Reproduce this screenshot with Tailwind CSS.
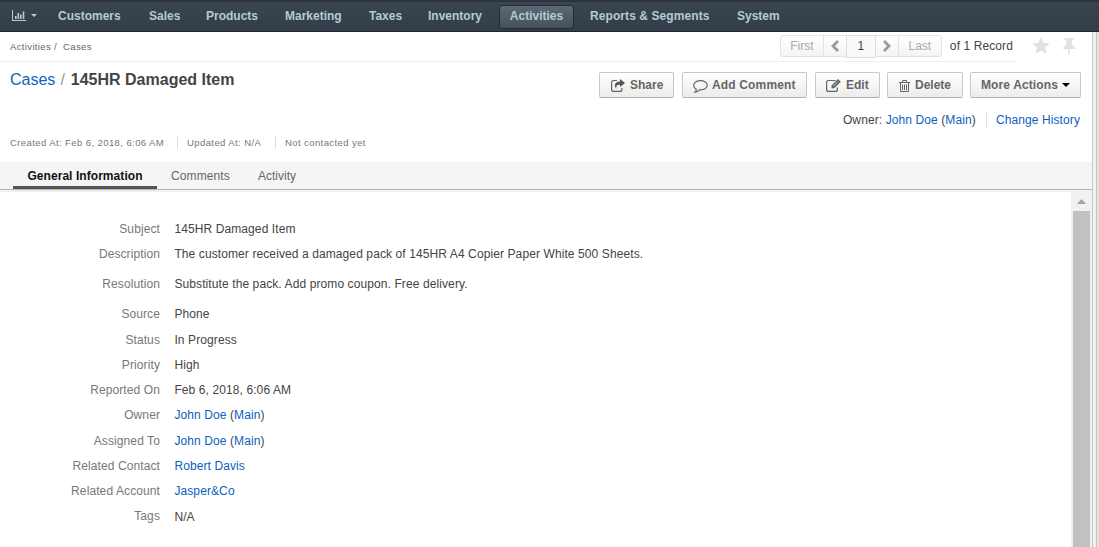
<!DOCTYPE html>
<html lang="en">
<head>
<meta charset="utf-8">
<title>145HR Damaged Item - Cases</title>
<script src="https://cdn.jsdelivr.net/npm/@tailwindcss/browser@4"></script>
</head>
<body class="bg-white">
<div class="w-[1099px] h-[547px] overflow-hidden flex flex-col font-['Liberation_Sans',Arial,sans-serif] text-[12px] leading-[16px] text-[#444]">
  <nav class="h-8 shrink-0 flex items-center border-t-2 border-t-[#2b343c] border-b border-b-[#1d2733] bg-linear-to-b from-[#3a454f] to-[#323d47] text-[#b3cbd7] font-bold">
    <div class="w-[44px] pl-3 pb-[2px] flex items-center gap-[5px]">
      <svg class="w-[14px] h-[11px]" viewBox="0 0 14 11" fill="currentColor"><path d="M0 0h1v10h13v1H0zM3 6h1.600v3H3zM5.500 3h1.600v6H5.500zM8 4.500h1.600V9H8zM10.700 1.500h1.600V9h-1.600z"/></svg>
      <svg class="w-[6px] h-[3px]" viewBox="0 0 6 3" fill="currentColor"><path d="M0 0h6L3 3z"/></svg>
    </div>
    <a class="w-[91px] pl-[14px] pb-[2px]">Customers</a>
    <a class="w-[57px] pl-[14px] pb-[2px]">Sales</a>
    <a class="w-[79px] pl-[14px] pb-[2px]">Products</a>
    <a class="w-[84px] pl-[14px] pb-[2px]">Marketing</a>
    <a class="w-[59px] pl-[14px] pb-[2px]">Taxes</a>
    <a class="w-[85px] pl-[14px] pb-[2px]">Inventory</a>
    <a class="w-[75px] h-6 pb-[2px] flex items-center justify-center rounded-[3px] border border-[#232c36] bg-linear-to-b from-[#5c6874] to-[#46515c]">Activities</a>
    <a class="w-[149px] pl-[16px] pb-[2px] tracking-[0.08px]">Reports &amp; Segments</a>
    <a class="pl-[14px] pb-[2px]">System</a>
  </nav>
  <div class="flex flex-1 min-h-0">
    <main class="w-[1092px] flex flex-col">
      <div class="h-[30px] shrink-0 flex">
        <div class="w-[1017px] flex border-b border-[#eee]">
          <div class="pl-[10px] pt-[7px] text-[9.5px] tracking-[0.36px] text-[#666] whitespace-pre">Activities /  Cases</div>
          <div class="ml-auto mr-[4px] pt-[3px] flex items-start">
            <div class="flex h-[22px] text-[#aaa] leading-[20px] text-center">
              <div class="w-[44px] border border-[#e3e3e3] rounded-l-[3px] bg-linear-to-b from-white to-[#f4f4f4]">First</div>
              <div class="w-[22px] border-y border-[#e3e3e3] bg-linear-to-b from-white to-[#f4f4f4] flex items-center justify-center"><svg class="w-2 h-3" viewBox="0 0 8 12" fill="none" stroke="#999" stroke-width="2.800"><path d="M7 1L2 6l5 5"/></svg></div>
              <div class="w-[30px] h-[23px] border border-[#ddd] bg-[#f9f9f9] text-[#444]">1</div>
              <div class="w-[22px] border-y border-[#e3e3e3] bg-linear-to-b from-white to-[#f4f4f4] flex items-center justify-center"><svg class="w-2 h-3" viewBox="0 0 8 12" fill="none" stroke="#999" stroke-width="2.800"><path d="M1 1l5 5-5 5"/></svg></div>
              <div class="w-[44px] border border-[#e3e3e3] rounded-r-[3px] bg-linear-to-b from-white to-[#f4f4f4]">Last</div>
            </div>
            <span class="pl-2 pt-[3px] leading-[16px] tracking-[0.1px]">of 1 Record</span>
          </div>
        </div>
        <svg class="ml-[15px] mt-[5px] w-[18px] h-[17px]" viewBox="0 0 18 17" fill="#e2e2e2"><path d="M9 0l2.600 5.700 6.100.7-4.500 4.200 1.200 6.100L9 13.700l-5.400 3 1.200-6.100L.3 6.400l6.100-.7z"/></svg>
        <svg class="ml-[13px] mt-[6px] w-[12px] h-[17px]" viewBox="0 0 12 17" fill="#e2e2e2"><path d="M1.500 0h9v2H9v5c2 .8 3 2 3 4H7l-.6 6h-.8L5 11H0c0-2 1-3.200 3-4V2H1.500z"/></svg>
      </div>
      <div class="h-[37px] shrink-0 flex pl-[10px] pr-[11px]">
        <h1 class="pt-[8px] text-[16px] leading-[20px] whitespace-pre"><a class="text-[#0a66c2]">Cases</a><span class="text-[#999] tracking-[0.7px]"> / </span><b>145HR Damaged Item</b></h1>
        <div class="ml-auto pt-[10px] flex gap-2 font-bold text-[#666]">
          <a class="w-[75px] h-[26px] pl-[11px] flex items-center gap-[5px] rounded-[2px] border border-[#c8c8c8] border-b-[#b0b0b0] bg-linear-to-b from-white to-[#ececec]"><svg class="w-[14px] h-[13px]" viewBox="0 0 14 13"><path d="M6 1.500H2.500Q.6 1.500.6 3.500v6.900q0 2 2 2h6.300q2 0 2-2V9" fill="none" stroke="#666" stroke-width="1.200"/><path d="M9 0l5 4-5 4V5.700C6 5.600 5 6.500 5.300 9.500 2.600 6.500 3.800 2.400 9 2.400z" fill="#555"/></svg>Share</a>
          <a class="w-[125px] h-[26px] pl-[10px] flex items-center gap-[4px] rounded-[2px] border border-[#c8c8c8] border-b-[#b0b0b0] bg-linear-to-b from-white to-[#ececec] tracking-[0.15px]"><svg class="w-[15px] h-[13px] mt-[3px]" viewBox="0 0 15 13" fill="none" stroke="#666" stroke-width="1.200"><path d="M7.500.7c3.800 0 6.800 2 6.800 4.600s-3 4.600-6.800 4.600h-1C5.300 11.300 3.800 12 2 12.200c.8-.8 1.300-1.600 1.300-3C1.700 8.300.7 7 .7 5.300.7 2.700 3.700.7 7.500.7z"/></svg>Add Comment</a>
          <a class="w-[65px] h-[26px] pl-[10px] flex items-center gap-[5px] rounded-[2px] border border-[#c8c8c8] border-b-[#b0b0b0] bg-linear-to-b from-white to-[#ececec]"><svg class="w-[15px] h-[13px]" viewBox="0 0 15 13"><path d="M9.500 1.500h-7Q.6 1.500.6 3.500v6.900q0 2 2 2h6.800q2 0 2-2V8.500" fill="none" stroke="#666" stroke-width="1.200"/><path d="M12 0l2.800 2.800-6.500 6.500H5.500V6.500z" fill="#666"/><path d="M7.300 7.200l4.400-4.400" stroke="#fff" stroke-width=".6"/></svg>Edit</a>
          <a class="w-[76px] -ml-px h-[26px] pl-[11px] flex items-center gap-[5px] rounded-[2px] border border-[#c8c8c8] border-b-[#b0b0b0] bg-linear-to-b from-white to-[#ececec]"><svg class="w-[11px] h-[12px] mt-[2px]" viewBox="0 0 11 12" fill="none" stroke="#666"><path d="M0 2.500h11M3.500 2.500v-2h4v2M1.500 2.500v9h8v-9M3.500 4.500v5.500M5.500 4.500v5.500M7.500 4.500v5.500"/></svg>Delete</a>
          <a class="w-[111px] -ml-px h-[26px] pl-[10px] flex items-center gap-[4px] rounded-[2px] border border-[#c8c8c8] border-b-[#b0b0b0] bg-linear-to-b from-white to-[#ececec] tracking-[0.12px]">More Actions<svg class="w-2 h-1" viewBox="0 0 8 4"><path d="M0 0h8L4 4z" fill="#000"/></svg></a>
        </div>
      </div>
      <div class="h-[35px] shrink-0 flex justify-end pr-3 pt-[13px] tracking-[0.1px]">
        <span class="pr-[10px] h-4 text-[#444]">Owner: <a class="text-[#0a5fc0]">John Doe</a> (<a class="text-[#0a5fc0]">Main</a>)</span>
        <a class="h-[14px] mt-px -mb-px pl-[9px] border-l border-[#ddd] text-[#0a5fc0] leading-[14px]">Change History</a>
      </div>
      <div class="h-[28px] shrink-0 flex pl-[10px] pt-[2px] text-[9.5px] tracking-[0.41px] leading-[13px] text-[#777]">
        <span class="w-[167px] h-[13px]">Created At: Feb 6, 2018, 6:06 AM</span>
        <span class="w-[98px] h-[13px] pl-[9px] border-l border-[#ddd]">Updated At: N/A</span>
        <span class="h-[13px] pl-[9px] border-l border-[#ddd]">Not contacted yet</span>
      </div>
      <div class="h-[28px] shrink-0 flex pl-[13px] leading-[28px] bg-[#f5f5f5] border-b border-[#b5b5b5] text-[#666]">
        <a class="w-[144px] text-center font-bold text-[#111] border-b-[3px] border-[#555] tracking-[0.06px]">General Information</a>
        <a class="pl-[14px] w-[87px] tracking-[0.1px]">Comments</a>
        <a class="pl-[14px]">Activity</a>
      </div>
      <div class="h-[2px] shrink-0 bg-[#f0f0f0]"></div>
      <div class="flex flex-1 min-h-0">
        <section class="w-[1071px] pt-[28px]">
          <dl class="grid grid-cols-[160px_1fr] gap-x-[14px] grid-rows-[25px_30px_30px_26px_25px_25px_25px_26px_25px_25px_26px_25px] leading-[18px] tracking-[0.1px] [&>dd]:pl-[0.4px]">
            <dt class="text-right text-[#777]">Subject</dt><dd>145HR Damaged Item</dd>
            <dt class="text-right text-[#777]">Description</dt><dd>The customer received a damaged pack of 145HR A4 Copier Paper White 500 Sheets.</dd>
            <dt class="text-right text-[#777]">Resolution</dt><dd>Substitute the pack. Add promo coupon. Free delivery.</dd>
            <dt class="text-right text-[#777]">Source</dt><dd>Phone</dd>
            <dt class="text-right text-[#777]">Status</dt><dd>In Progress</dd>
            <dt class="text-right text-[#777]">Priority</dt><dd>High</dd>
            <dt class="text-right text-[#777]">Reported On</dt><dd>Feb 6, 2018, 6:06 AM</dd>
            <dt class="text-right text-[#777]">Owner</dt><dd><a class="text-[#0a5fc0]">John Doe</a> (<a class="text-[#0a5fc0]">Main</a>)</dd>
            <dt class="text-right text-[#777]">Assigned To</dt><dd><a class="text-[#0a5fc0]">John Doe</a> (<a class="text-[#0a5fc0]">Main</a>)</dd>
            <dt class="text-right text-[#777]">Related Contact</dt><dd><a class="text-[#0a5fc0]">Robert Davis</a></dd>
            <dt class="text-right text-[#777]">Related Account</dt><dd><a class="text-[#0a5fc0]">Jasper&amp;Co</a></dd>
            <dt class="text-right text-[#777] -mt-px">Tags</dt><dd>N/A</dd>
          </dl>
        </section>
        <div class="w-[21px] bg-[#f1f1f1] px-[2px] pt-[7px] flex flex-col items-center">
          <svg class="w-[9px] h-[5px] shrink-0" viewBox="0 0 9 5"><path d="M4.500 0L9 5H0z" fill="#a3a3a3"/></svg>
          <div class="mt-[7px] w-[17px] flex-1 bg-[#c1c1c1]"></div>
        </div>
      </div>
    </main>
    <div class="w-[5px] border-x border-[#c8c8c8] bg-[#f1f1f1]"></div>
    <div class="w-[2px] bg-[#e2e2e2]"></div>
  </div>
</div>
</body>
</html>
